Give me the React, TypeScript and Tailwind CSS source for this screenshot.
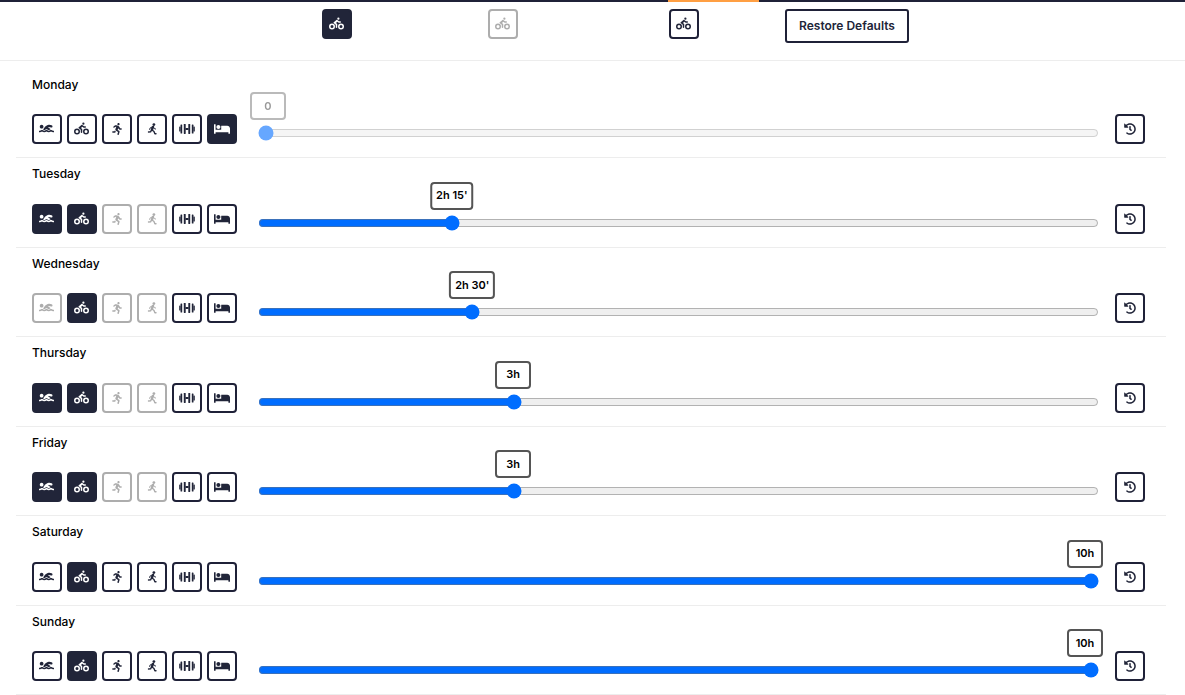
import { useState } from 'react';
import type { ComponentType } from 'react';
import { FaSwimmer, FaBiking, FaRunning, FaBed, FaHistory } from 'react-icons/fa';

type State = 'on' | 'off' | 'disabled';
type Icon = ComponentType<{ className?: string }>;

const tones: Record<State, string> = {
  on: 'border-[#212539] bg-[#212539] text-white',
  off: 'border-[#1f2138] bg-white text-[#212539]',
  disabled: 'border-[#adadad] bg-white text-[#adadad]',
};

function Walker({ className }: { className?: string }) {
  return (
    <svg viewBox="0 0 16 16" className={className} fill="none" stroke="currentColor" strokeLinecap="round" strokeLinejoin="round">
      <circle cx="9.9" cy="3.6" r="1.4" fill="currentColor" stroke="none" />
      <path d="M9 5.9 7.9 8.8" strokeWidth="2.4" />
      <path d="M8.4 5.9 6.2 6.9 5.6 8.4M9.4 6 10.3 7.6 11.6 8" strokeWidth="1" />
      <path d="M8 9 10 10.5 10.9 12.8 12 12.8" strokeWidth="1.4" />
      <path d="M7.4 9.2 6.6 10.9 4.5 11" strokeWidth="1.4" />
    </svg>
  );
}

function Dumbbell({ className }: { className?: string }) {
  return (
    <svg viewBox="0 0 16 16" className={className} fill="currentColor">
      <rect x="0.2" y="5.4" width="1.4" height="5.2" rx="0.6" />
      <rect x="1.5" y="3.4" width="1.7" height="9.2" rx="0.6" />
      <rect x="4.8" y="3" width="1.9" height="10" rx="0.4" />
      <rect x="6.5" y="7" width="3" height="2" />
      <rect x="9.3" y="3" width="1.9" height="10" rx="0.4" />
      <rect x="12.8" y="3.4" width="1.7" height="9.2" rx="0.6" />
      <rect x="14.4" y="5.4" width="1.4" height="5.2" rx="0.6" />
    </svg>
  );
}

const sports: { name: string; icon: Icon; size?: string }[] = [
  { name: 'Swim', icon: FaSwimmer },
  { name: 'Bike', icon: FaBiking },
  { name: 'Run', icon: FaRunning, size: 'size-3' },
  { name: 'Walk', icon: Walker, size: 'size-4' },
  { name: 'Strength', icon: Dumbbell, size: 'size-4' },
  { name: 'Rest', icon: FaBed, size: 'size-4' },
];

const week: { day: string; hours: number; states: State[] }[] = [
  { day: 'Monday', hours: 0, states: ['off', 'off', 'off', 'off', 'off', 'on'] },
  { day: 'Tuesday', hours: 2.25, states: ['on', 'on', 'disabled', 'disabled', 'off', 'off'] },
  { day: 'Wednesday', hours: 2.5, states: ['disabled', 'on', 'disabled', 'disabled', 'off', 'off'] },
  { day: 'Thursday', hours: 3, states: ['on', 'on', 'disabled', 'disabled', 'off', 'off'] },
  { day: 'Friday', hours: 3, states: ['on', 'on', 'disabled', 'disabled', 'off', 'off'] },
  { day: 'Saturday', hours: 10, states: ['off', 'on', 'off', 'off', 'off', 'off'] },
  { day: 'Sunday', hours: 10, states: ['off', 'on', 'off', 'off', 'off', 'off'] },
];

function IconButton({
  label,
  icon: Icon,
  state,
  size = 'mr-px mb-px size-[15px]',
}: {
  label: string;
  icon: Icon;
  state: State;
  size?: string;
}) {
  return (
    <button
      type="button"
      aria-label={label}
      disabled={state === 'disabled'}
      className={`flex size-[30px] shrink-0 items-center justify-center rounded border-2 ${tones[state]}`}
    >
      <Icon className={size} />
    </button>
  );
}

function format(hours: number) {
  if (hours === 0) return '0';
  const minutes = Math.round((hours % 1) * 60);
  return `${Math.floor(hours)}h${minutes ? ` ${minutes}'` : ''}`;
}

function DayRow({ day, hours, states }: { day: string; hours: number; states: State[] }) {
  const [value, setValue] = useState(hours);
  const resting = states[5] === 'on';
  const percent = value * 10;
  return (
    <section className="flex items-end border-b border-[#ededed] pt-1.5 pr-[21px] pb-[13px] pl-4">
      <div className="shrink-0">
        <h2 className="text-[13px] leading-normal font-medium text-black">
          <span className="text-[12px]">{day}</span>
        </h2>
        <div className="mt-5 flex gap-[5px]">
          {sports.map((sport, i) => (
            <IconButton
              key={sport.name}
              label={`${day} ${sport.name}`}
              icon={sport.icon}
              size={sport.size}
              state={states[i]}
            />
          ))}
        </div>
      </div>
      <div className={`relative mr-4 mb-[3px] ml-[21px] flex-1 ${resting ? 'opacity-60' : ''}`}>
        <output
          htmlFor={`${day}-hours`}
          className={`absolute bottom-full mb-[5px] flex h-7 min-w-9 -translate-x-1/2 items-center justify-center rounded border-2 px-1 text-[11px] font-semibold whitespace-nowrap ${resting ? 'border-[#8c8c8c] text-[#555555]' : 'border-[#555555] text-black'}`}
          style={{ left: `calc(${percent}% + ${10 - percent * 0.24}px)` }}
        >
          {format(value)}
        </output>
        <input
          id={`${day}-hours`}
          aria-label={`${day} available hours`}
          type="range"
          min={0}
          max={10}
          step={0.25}
          value={value}
          onChange={(e) => setValue(Number(e.target.value))}
          className="block h-4 w-full accent-[#006dff]"
        />
      </div>
      <IconButton label={`Reset ${day}`} icon={FaHistory} size="size-3" state="off" />
    </section>
  );
}

export default function App() {
  return (
    <div className="bg-white font-[Inter,sans-serif]">
      <div className="flex h-0.5 bg-[#1f2138] pl-[668px]">
        <div className="w-[91px] bg-[#ff9f43]" />
      </div>
      <header className="grid grid-cols-[162fr_170fr_192fr_134fr] items-start justify-items-center border-b border-[#ededed] pt-[7px] pr-[271px] pb-[17px] pl-64">
        <IconButton label="Selected" icon={FaBiking} state="on" />
        <IconButton label="Unavailable" icon={FaBiking} state="disabled" />
        <IconButton label="Available" icon={FaBiking} state="off" />
        <button
          type="button"
          className="rounded-[3px] border-2 border-[#1f2138] px-3 py-[5px] text-[13px] leading-normal font-semibold whitespace-nowrap text-[#212539]"
        >
          <span className="text-[12px]">Restore Defaults</span>
        </button>
      </header>
      <main className="mr-[19px] ml-4 pt-2">
        {week.map((entry) => (
          <DayRow key={entry.day} {...entry} />
        ))}
      </main>
    </div>
  );
}
